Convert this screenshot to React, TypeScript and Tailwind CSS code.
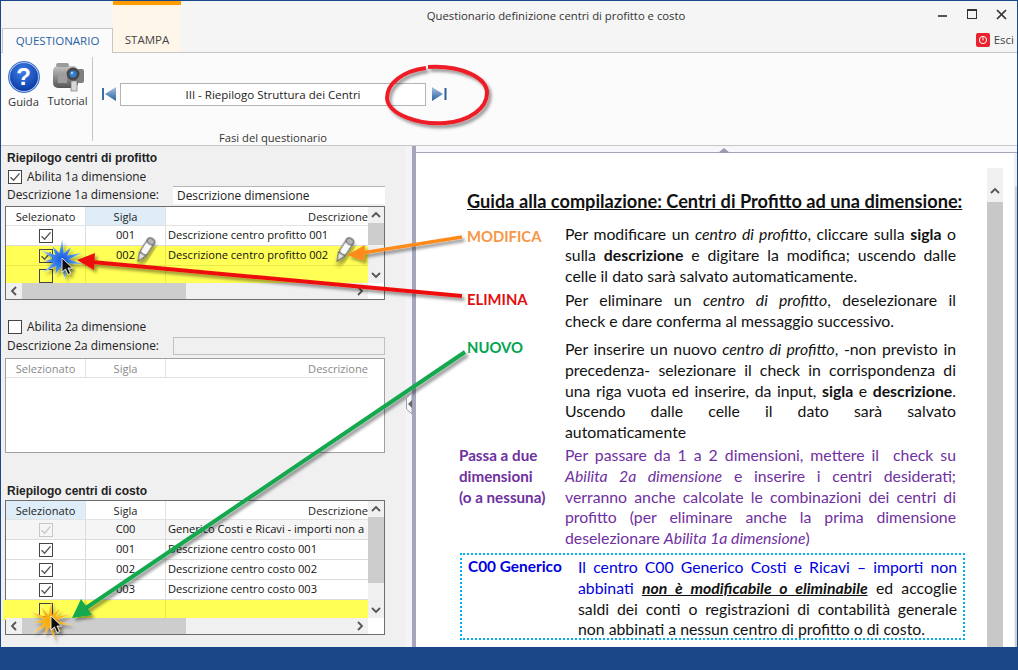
import React from "react";

const ui = "font-['Open_Sans','Noto_Sans',sans-serif]";

function Check({ on = false, dim = false, dark = false }: { on?: boolean; dim?: boolean; dark?: boolean }) {
  return (
    <svg width="14" height="14" viewBox="0 0 14 14" className="block shrink-0">
      <rect x="0.5" y="0.5" width="13" height="13" fill={dim ? "#f6f6f6" : "#fff"} fillOpacity={dark ? 0 : 1} stroke={dim ? "#c8c8c8" : "#444"} />
      {on && <path d="M2.5 7.2 L5.6 10.2 L11.5 3.4" fill="none" stroke={dim ? "#c8c8c8" : "#555"} strokeWidth="1.4" />}
    </svg>
  );
}

type Row = { c: boolean; s: string; d: string; y?: boolean; dim?: boolean; dark?: boolean; out?: boolean };

function Grid({ rows, hi, h, empty }: { rows: Row[]; hi: 0 | 1 | 2; h: string; empty?: boolean }) {
  const head = empty ? "text-[#8a8a8a]" : "text-[#222]";
  return (
    <div className={`mx-[4px] ${h} w-[380px] border bg-white flex flex-col shrink-0 ${empty ? "border-[#a0a0a0]" : "border-[#6e6e6e]"}`}>
      <div className="flex flex-1 min-h-0">
        <div className="w-[362px] flex flex-col min-w-0">
          <div className={`flex h-[19px] shrink-0 text-[11.1px] leading-[19px] border-b border-[#e2e2e2] ${head}`}>
            <div className={`w-[80px] text-center border-r border-[#e2e2e2] ${hi === 0 ? "bg-[#deedf7]" : ""}`}>Selezionato</div>
            <div className={`w-[80px] text-center border-r border-[#e2e2e2] ${hi === 1 ? "bg-[#deedf7]" : ""}`}>Sigla</div>
            <div className="flex-1 text-right overflow-hidden">Descrizione</div>
          </div>
          {rows.map((r, i) => (
            <div key={i} className={`flex h-[20px] shrink-0 text-[11.1px] leading-[18px] text-[#111] border-b ${r.y ? "bg-[#ffff55] border-[#e8e84a]" : r.dim ? "bg-[#f5f5f5] border-[#dcdcdc]" : "border-[#dcdcdc]"} ${r.out ? "-ml-[3px]" : ""}`}>
              <div className={`${r.out ? "w-[83px] pl-[3px]" : "w-[80px]"} flex items-center justify-center border-r ${r.y ? "border-[#e8e84a]" : "border-[#dcdcdc]"}`}>
                <Check on={r.c} dim={r.dim} dark={r.y} />
              </div>
              <div className={`w-[80px] text-center border-r ${r.y ? "border-[#e8e84a]" : "border-[#dcdcdc]"}`}>{r.s}</div>
              <div className="flex-1 pl-[2px] whitespace-nowrap overflow-hidden">{r.d}</div>
            </div>
          ))}
        </div>
        {!empty && (
          <div className="w-[16px] flex flex-col items-center bg-[#f0f0f0] shrink-0">
            <Chev d="up" />
            <div className={`w-full ${rows.length > 3 ? "h-[66px]" : "h-[22px]"} bg-[#cdcdcd]`} />
            <div className="flex-1" />
            <Chev d="down" />
          </div>
        )}
      </div>
      {!empty && (
        <div className="h-[16px] flex items-center bg-[#f0f0f0] shrink-0 w-full">
          <Chev d="left" />
          <div className="w-[164px] h-full bg-[#cdcdcd]" />
          <div className="flex-1" />
          <Chev d="right" />
          <div className="w-[16px] h-full bg-white" />
        </div>
      )}
    </div>
  );
}

function Chev({ d }: { d: "up" | "down" | "left" | "right" }) {
  const p = { up: "M2 8 L6 4 L10 8", down: "M2 4 L6 8 L10 4", left: "M8 2 L4 6 L8 10", right: "M4 2 L8 6 L4 10" }[d];
  return (
    <svg width="16" height="16" viewBox="-2 -2 16 16" className="shrink-0">
      <path d={p} fill="none" stroke="#555" strokeWidth="1.8" />
    </svg>
  );
}

function Line({ children, last }: { children: React.ReactNode; last?: boolean }) {
  return <div className={last ? "text-left whitespace-nowrap" : "text-justify [text-align-last:justify] whitespace-nowrap"}>{children}</div>;
}

function Camera() {
  return (
    <svg width="32" height="29" viewBox="0 0 32 29">
      <defs>
        <linearGradient id="cam" x1="0" y1="0" x2="0" y2="1">
          <stop offset="0" stopColor="#c4c4c4" />
          <stop offset="1" stopColor="#555" />
        </linearGradient>
      </defs>
      <rect x="24" y="6" width="8" height="14" rx="2" fill="#7f7f7f" />
      <rect x="1" y="3" width="25" height="22" rx="5" fill="url(#cam)" />
      <rect x="4" y="0" width="13" height="4" rx="2" fill="#9a9a9a" />
      <circle cx="21" cy="11" r="6.5" fill="#474747" />
      <circle cx="21" cy="11" r="3.6" fill="#2f7fd0" />
      <circle cx="20" cy="10" r="1.2" fill="#a9d2f5" />
      <rect x="6" y="11" width="9" height="9" fill="#9d9d9d" />
      <rect x="19" y="18" width="6" height="10" fill="#d8d8d8" stroke="#666" strokeWidth="0.6" />
    </svg>
  );
}

function Help() {
  return (
    <div className="w-[32px] h-[32px] rounded-full border-2 border-[#b7cdf2] outline outline-1 outline-[#3a6fc4] -outline-offset-1 bg-[radial-gradient(circle_at_45%_30%,#3f7fe6,#0d3ea8_75%)] flex items-center justify-center text-white font-bold text-[24px] leading-none font-['Liberation_Sans',sans-serif]">
      ?
    </div>
  );
}

function Nav({ dir }: { dir: "l" | "r" }) {
  return (
    <svg width="15" height="14" viewBox="0 0 15 14" className="shrink-0">
      <defs>
        <linearGradient id={`n${dir}`} x1="0" y1="0" x2="0" y2="1">
          <stop offset="0" stopColor="#a9c4e6" />
          <stop offset="1" stopColor="#2a5f9e" />
        </linearGradient>
      </defs>
      {dir === "l" ? (
        <>
          <rect x="0" y="1" width="2" height="12" fill="#3a6ea8" />
          <path d="M14 0 V14 L3 7 Z" fill={`url(#n${dir})`} />
        </>
      ) : (
        <>
          <path d="M0 0 V14 L11 7 Z" fill={`url(#n${dir})`} />
          <rect x="12.5" y="1" width="2" height="12" fill="#2a5f9e" />
        </>
      )}
    </svg>
  );
}

const t1: Row[] = [
  { c: true, s: "001", d: "Descrizione centro profitto 001" },
  { c: true, s: "002", d: "Descrizione centro profitto 002", y: true },
  { c: false, s: "", d: "", y: true },
];
const t3: Row[] = [
  { c: true, s: "C00", d: "Generico Costi e Ricavi - importi non a", dim: true },
  { c: true, s: "001", d: "Descrizione centro costo 001" },
  { c: true, s: "002", d: "Descrizione centro costo 002" },
  { c: true, s: "003", d: "Descrizione centro costo 003" },
  { c: false, s: "", d: "", y: true, out: true },
];

function Pen({ x, y }: { x: number; y: number }) {
  return (
    <g transform={`translate(${x} ${y}) rotate(33) scale(1.2)`} filter="url(#sh)">
      <rect x="-3.2" y="-10" width="6.4" height="15" rx="2.5" fill="#fafafa" stroke="#666" strokeWidth="0.9" />
      <rect x="-3.2" y="-10" width="6.4" height="5" rx="2.5" fill="#b5b5b5" stroke="#666" strokeWidth="0.9" />
      <path d="M-3.2 5 L0 12 L3.2 5 Z" fill="#e2e2e2" stroke="#666" strokeWidth="0.9" />
    </g>
  );
}

function burst(cx: number, cy: number, r1: number, r2: number, n: number) {
  const pts: string[] = [];
  for (let i = 0; i < n * 2; i++) {
    const a = (Math.PI * i) / n + 0.2;
    const r = i % 2 === 0 ? r1 * (i % 4 === 0 ? 1 : 0.75) : r2;
    pts.push(`${(cx + Math.cos(a) * r * 1.1).toFixed(1)},${(cy + Math.sin(a) * r).toFixed(1)}`);
  }
  return pts.join(" ");
}

function Cursor({ x, y }: { x: number; y: number }) {
  return (
    <path
      transform={`translate(${x} ${y})`}
      d="M0 0 V14 L3.5 11 L6 16.5 L8.5 15.5 L6 10 L10.5 10 Z"
      fill="#111"
      stroke="#fff"
      strokeWidth="0.8"
      filter="url(#sh)"
    />
  );
}

function Overlay() {
  return (
    <svg className="absolute left-0 top-0 pointer-events-none" width="1018" height="670" viewBox="0 0 1018 670">
      <defs>
        <filter id="sh" x="-30%" y="-30%" width="180%" height="180%">
          <feDropShadow dx="2.5" dy="3" stdDeviation="1.6" floodColor="#000" floodOpacity="0.4" />
        </filter>
        <radialGradient id="bb">
          <stop offset="0" stopColor="#1a55e0" />
          <stop offset="0.5" stopColor="#3d86ee" />
          <stop offset="1" stopColor="#b4d4f7" />
        </radialGradient>
        <radialGradient id="ob">
          <stop offset="0" stopColor="#f5a800" />
          <stop offset="0.6" stopColor="#fbbb30" />
          <stop offset="1" stopColor="#fbd99a" />
        </radialGradient>
      </defs>
      <path
        d="M426 68 C402 71 387 84 387 98 C388 115 420 125 445 123 C470 121 487 108 487 93 C487 78 462 65 428 67"
        fill="none"
        stroke="#ee1c25"
        strokeWidth="4"
        filter="url(#sh)"
      />
      <Pen x={146} y={249} />
      <Pen x={345} y={249} />
      <polygon points={burst(61, 260, 21, 7, 11)} fill="url(#bb)" filter="url(#sh)" />
      <Cursor x={62} y={258} />
      <polygon points={burst(50, 621, 21, 6, 11)} fill="url(#ob)" filter="url(#sh)" />
      <Cursor x={51} y={616} />
      <g filter="url(#sh)">
        <path d="M462 237 L362 253" stroke="#ff8a1e" strokeWidth="3.4" />
        <path d="M347 255 L365 245 L364 261 Z" fill="#ff8a1e" />
      </g>
      <g filter="url(#sh)">
        <path d="M462 296 L92 262" stroke="#ee1111" strokeWidth="4" />
        <path d="M77 260 L95 253 L94 270 Z" fill="#ee1111" />
      </g>
      <g filter="url(#sh)">
        <path d="M465 352 L86 608" stroke="#12a84e" strokeWidth="4" />
        <path d="M72 618 L81 599 L92 615 Z" fill="#12a84e" />
      </g>
      <path d="M724 148 L718 153 H730 Z" fill="#9a9ab0" />
      <path d="M412 393 L406.5 398 V409 L412 414 Z" fill="#fbfbfd" stroke="#9a9ab0" />
      <path d="M408 404 L412 400 V408 Z" fill="#666" />
    </svg>
  );
}

export default function App() {
  return (
    <div className={`relative w-[1018px] h-[670px] bg-[#1a4787] overflow-hidden flex flex-col pt-[1px] px-[1px] ${ui}`}>
      {/* Title and tabs */}
      <div className="h-[52px] bg-[#f5f5f5] flex flex-col shrink-0">
        <div className="h-[28px] flex items-start relative">
          <div className="w-[112px]" />
          <div className="w-[68px] h-full bg-[#fff6ea] border-t-[4px] border-[#ff9c00]" />
          <div className="flex-1 text-center text-[11.3px] leading-[30px] text-[#333] pr-[7px]">Questionario definizione centri di profitto e costo</div>
          <div className="flex items-center gap-[19px] pt-[7px] pr-[10px] text-[#444]">
            <svg width="10" height="12" viewBox="0 0 10 12"><rect x="0" y="7" width="9" height="2" fill="#555" /></svg>
            <svg width="10" height="10" viewBox="0 0 10 10"><rect x="0.5" y="0.5" width="9" height="9" fill="none" stroke="#333" /><rect x="0" y="0" width="10" height="2" fill="#333" /></svg>
            <svg width="11" height="11" viewBox="0 0 11 11"><path d="M1 1 L10 10 M10 1 L1 10" stroke="#333" strokeWidth="1.7" /></svg>
          </div>
        </div>
        <div className="h-[24px] flex items-end border-b border-[#c6c6c6]">
          <div className="ml-[1px] w-[111px] h-[25px] bg-[#fbfbfb] border border-b-0 border-[#c6c6c6] text-center text-[11.5px] leading-[24px] text-[#2a5ea5] -mb-px">QUESTIONARIO</div>
          <div className="w-[68px] h-[24px] bg-[#fff6ea] text-center text-[11.5px] leading-[24px] text-[#444]">STAMPA</div>
          <div className="flex-1" />
          <div className="flex items-center gap-[4px] pb-[4px] pr-[3px] text-[11.5px] text-[#444] leading-[16px]">
            <div className="w-[14px] h-[14px] bg-[#e8232e] rounded-[2px] flex items-center justify-center">
              <svg width="10" height="10" viewBox="0 0 10 10"><circle cx="5" cy="5" r="3.6" fill="none" stroke="#fff" strokeWidth="1" /><rect x="4.5" y="2.4" width="1" height="3" fill="#fff" /></svg>
            </div>
            Esci
          </div>
        </div>
      </div>
      {/* Ribbon */}
      <div className="h-[93px] bg-[#fbfbfb] border-b border-[#c6c6c6] flex shrink-0 pt-[4px] pb-[4px]">
        <div className="w-[92px] h-full border-r border-[#c6c6c6] flex shrink-0 text-[11.2px] text-[#333]">
          <div className="w-[45px] flex flex-col items-center pt-[4px]">
            <Help />
            <div className="mt-[1px] leading-[16px]">Guida</div>
          </div>
          <div className="w-[40px] flex flex-col items-center pt-[6px] pl-[3px]">
            <Camera />
            <div className="mt-[1px] leading-[16px] whitespace-nowrap">Tutorial</div>
          </div>
        </div>
        <div className="flex-1 flex flex-col">
          <div className="h-[72px] flex items-start pt-[26px] pl-[9px] gap-[3px] shrink-0">
            <div className="pt-[4px]"><Nav dir="l" /></div>
            <div className="w-[306px] h-[23px] bg-white border border-[#b4b4b4] text-center text-[11.5px] leading-[21px] text-[#222]">III - Riepilogo Struttura dei Centri</div>
            <div className="pt-[4px] pl-[3px]"><Nav dir="r" /></div>
          </div>
          <div className="w-[360px] text-center text-[11.2px] leading-[16px] text-[#333] pt-[1px]">Fasi del questionario</div>
        </div>
      </div>
      {/* Body */}
      <div className="flex-1 flex min-h-0">
        <div className="w-[404px] bg-[#f0f0f0] flex flex-col shrink-0 pt-[4px] text-[11.9px] text-[#222]">
          <div className="pl-[6px] font-bold text-[12px] leading-[16px] font-['Liberation_Sans',sans-serif]">Riepilogo centri di profitto</div>
          <div className="flex items-center gap-[5px] pl-[7px] h-[19px] mt-[1px]"><Check on />Abilita 1a dimensione</div>
          <div className="flex items-center pl-[6px] h-[19px] -mt-px">
            <div className="w-[166px]">Descrizione 1a dimensione:</div>
            <div className="w-[212px] h-[18px] bg-white border-t border-[#b5b5b5] pl-[4px] leading-[17px]">Descrizione dimensione</div>
          </div>
          <div className="h-[2px] shrink-0" />
          <Grid rows={t1} hi={1} h="h-[94px]" />
          <div className="h-[17px] shrink-0" />
          <div className="flex items-center gap-[5px] pl-[7px] h-[19px]"><Check />Abilita 2a dimensione</div>
          <div className="flex items-center pl-[6px] h-[19px]">
            <div className="w-[166px]">Descrizione 2a dimensione:</div>
            <div className="w-[212px] h-[18px] bg-[#f0f0f0] border border-[#c0c0c0]" />
          </div>
          <div className="h-[3px] shrink-0" />
          <Grid rows={[]} hi={2} h="h-[95px]" empty />
          <div className="h-[30px] shrink-0" />
          <div className="pl-[6px] font-bold text-[12px] leading-[16px] font-['Liberation_Sans',sans-serif]">Riepilogo centri di costo</div>
          <div className="h-[1px] shrink-0" />
          <Grid rows={t3} hi={0} h="h-[135px]" />
        </div>
        {/* Splitter */}
        <div className="w-[7px] bg-[#f4f4f8] shrink-0" />
        <div className="w-[4px] bg-[#a5a5bb] shrink-0" />
        {/* Doc */}
        <div className="flex-1 flex flex-col min-w-0 bg-white">
          <div className="h-[7px] bg-[#f6f6fb] border-b-[1.5px] border-[#a5a5bb] shrink-0" />
          <div className="flex-1 flex min-h-0">
            <div className="w-[571px] shrink-0 pt-[38px] font-['Lato','Noto_Sans',sans-serif] text-[15.8px] leading-[20.8px] text-[#111] overflow-hidden">
              <div className="ml-[51px] w-[494px] text-center font-bold text-[18.2px] leading-[20px] underline whitespace-nowrap">Guida alla compilazione: Centri di Profitto ad una dimensione:</div>
              <div className="flex mt-[13px] ml-[51px]">
                <div className="w-[98px] font-bold text-[14.8px] text-[#f79646] pt-[2px]">MODIFICA</div>
                <div className="w-[391px] -mt-px">
                  <div className="pt-px"><Line>Per modificare un <i>centro di profitto</i>, cliccare sulla <b>sigla</b> o</Line></div>
                  <Line>sulla <b>descrizione</b> e digitare la modifica; uscendo dalle</Line>
                  <Line last>celle il dato sarà salvato automaticamente.</Line>
                </div>
              </div>
              <div className="flex mt-[4px] ml-[51px]">
                <div className="w-[98px] font-bold text-[14.8px] text-[#e01010] -mt-px">ELIMINA</div>
                <div className="w-[391px]">
                  <Line>Per eliminare un <i>centro di profitto</i>, deselezionare il</Line>
                  <Line last>check e dare conferma al messaggio successivo.</Line>
                </div>
              </div>
              <div className="flex mt-[7px] ml-[51px]">
                <div className="w-[98px] font-bold text-[14.8px] text-[#00a550] -mt-[2px]">NUOVO</div>
                <div className="w-[391px]">
                  <Line>Per inserire un nuovo <i>centro di profitto</i>, -non previsto in</Line>
                  <Line>precedenza- selezionare il check in corrispondenza di</Line>
                  <Line>una riga vuota ed inserire, da input, <b>sigla</b> e <b>descrizione</b>.</Line>
                  <Line>Uscendo dalle celle il dato sarà salvato</Line>
                  <Line last>automaticamente</Line>
                </div>
              </div>
              <div className="flex mt-[2px] ml-[43px] text-[#7030a0]">
                <div className="w-[106px] font-bold text-[15.2px]">
                  <div>Passa a due</div>
                  <div>dimensioni</div>
                  <div>(o a nessuna)</div>
                </div>
                <div className="w-[391px]">
                  <Line>Per passare da 1 a 2 dimensioni, mettere il&nbsp; check su</Line>
                  <Line><i>Abilita 2a dimensione</i> e inserire i centri desiderati;</Line>
                  <Line>verranno anche calcolate le combinazioni dei centri di</Line>
                  <Line>profitto (per eliminare anche la prima dimensione</Line>
                  <Line last>deselezionare <i>Abilita 1a dimensione</i>)</Line>
                </div>
              </div>
              <div className="flex mt-[4px] ml-[44px] w-[505px] h-[87px] border-2 border-dotted border-[#00b0f0] pl-[6px] pt-[2px]">
                <div className="w-[110px] font-bold text-[15.4px] text-[#0000e0] -mt-[1px]">C00 Generico</div>
                <div className="w-[379px]">
                  <Line><span className="text-[#0000e0]">Il centro C00 Generico Costi e Ricavi – importi non</span></Line>
                  <Line><span className="text-[#0000e0]">abbinati</span> <b className="italic underline">non è modificabile o eliminabile</b> ed accoglie</Line>
                  <Line>saldi dei conti o registrazioni di contabilità generale</Line>
                  <Line last>non abbinati a nessun centro di profitto o di costo.</Line>
                </div>
              </div>
            </div>
            <div className="w-[16px] shrink-0 pt-[15px] flex flex-col">
              <div className="h-[34px] bg-[#f0f0f0] flex items-end justify-center pb-[3px]"><Chev d="up" /></div>
              <div className="flex-1 bg-[#c8c8c8]" />
            </div>
            <div className="flex-1 bg-white" />
            <div className="w-[3px] bg-[#eeeeee] flex flex-col shrink-0">
              <div className="h-[33px] shrink-0" />
              <div className="flex-1 w-[2px] ml-[1px] bg-[#d0d0d0]" />
            </div>
          </div>
        </div>
      </div>
      <div className="h-[23px] shrink-0" />
      <Overlay />
    </div>
  );
}
